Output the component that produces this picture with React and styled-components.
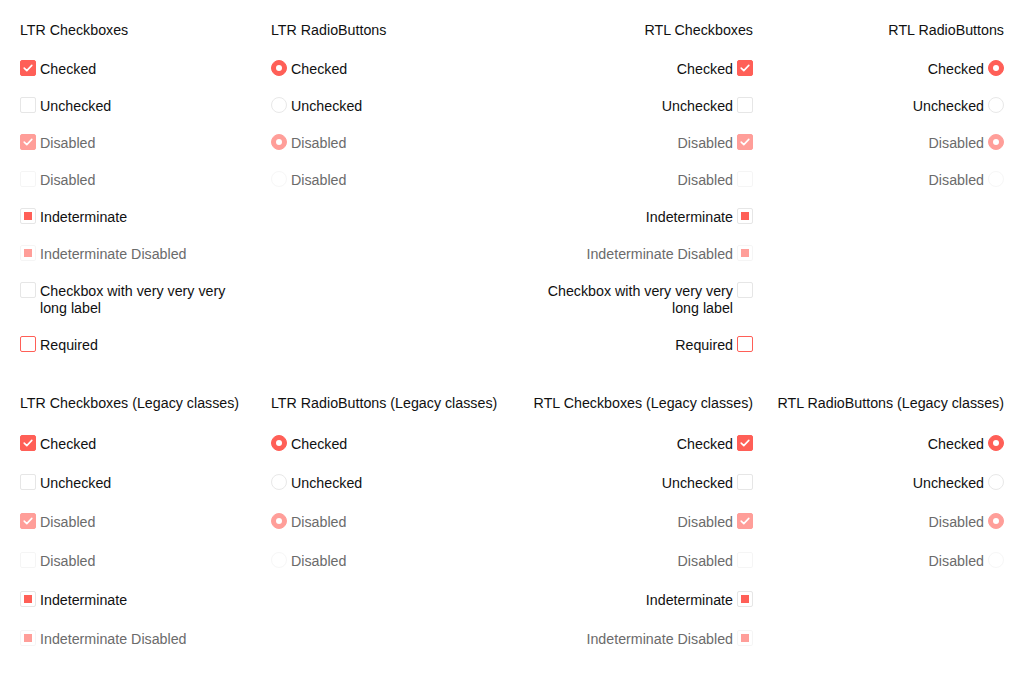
import React from "react";
import styled, { createGlobalStyle, css } from "styled-components";

const RED = "#ff5f57";

const GlobalStyle = createGlobalStyle`
  html, body {
    margin: 0;
    padding: 0;
    background: #fff;
  }
  body {
    font-family: "Liberation Sans", Arial, sans-serif;
    font-size: 14.25px;
    color: #111;
  }
`;

const Page = styled.div`
  padding: 22px 20px 0 0;
  display: flex;
  flex-direction: column;
  gap: 41px;
`;

const Section = styled.div`
  display: grid;
  grid-template-columns: repeat(4, 1fr);
`;

const Column = styled.div`
  padding-left: 20px;
  direction: ${(p) => (p.$rtl ? "rtl" : "ltr")};
  display: flex;
  flex-direction: column;
  gap: ${(p) => (p.$legacy ? "24px" : "22px")};
`;

const Title = styled.div`
  line-height: 17px;
  color: #111;
  white-space: nowrap;
`;

const List = styled.div`
  display: flex;
  flex-direction: column;
  gap: ${(p) => (p.$legacy ? "22px" : "20px")};
`;

const Row = styled.label`
  display: flex;
  align-items: flex-start;
  gap: 4px;
  line-height: 17px;
  color: ${(p) => (p.$disabled ? "#6b6b6b" : "#111")};
`;

const Text = styled.span`
  flex: 1;
  max-width: 211px;
`;

const boxBase = css`
  flex: none;
  box-sizing: border-box;
  width: 16px;
  height: 16px;
  margin-top: -1px;
  display: flex;
  align-items: center;
  justify-content: center;
  opacity: ${(p) => (p.$disabled ? 0.6 : 1)};
`;

const Box = styled.span`
  ${boxBase};
  border-radius: 2px;
  background: ${(p) => (p.$checked ? RED : "#fff")};
  border: 1px solid
    ${(p) =>
      p.$checked ? RED : p.$required ? RED : p.$disabled ? "#f0f0f0" : "#e6e6e6"};
`;

const IndeterminateMark = styled.span`
  width: 8px;
  height: 8px;
  background: ${RED};
`;

const Radio = styled.span`
  ${boxBase};
  border-radius: 50%;
  background: ${(p) => (p.$checked ? RED : "#fff")};
  border: 1px solid ${(p) => (p.$checked ? RED : p.$disabled ? "#f2f2f2" : "#e8e8e8")};
`;

const RadioDot = styled.span`
  width: 6px;
  height: 6px;
  border-radius: 50%;
  background: #fff;
`;

const Check = () => (
  <svg width="12" height="12" viewBox="0 0 12 12" fill="none">
    <path
      d="M2.2 6.1 L4.8 8.6 L9.8 3.4"
      stroke="#fff"
      strokeWidth="1.6"
      strokeLinecap="round"
      strokeLinejoin="round"
    />
  </svg>
);

const Checkbox = ({ checked, indeterminate, disabled, required, children }) => (
  <Row $disabled={disabled}>
    <Box $checked={checked} $disabled={disabled} $required={required}>
      {checked && <Check />}
      {indeterminate && <IndeterminateMark />}
    </Box>
    <Text>{children}</Text>
  </Row>
);

const RadioButton = ({ checked, disabled, children }) => (
  <Row $disabled={disabled}>
    <Radio $checked={checked} $disabled={disabled}>
      {checked && <RadioDot />}
    </Radio>
    <Text>{children}</Text>
  </Row>
);

const checkboxItems = [
  { label: "Checked", checked: true },
  { label: "Unchecked" },
  { label: "Disabled", checked: true, disabled: true },
  { label: "Disabled", disabled: true },
  { label: "Indeterminate", indeterminate: true },
  { label: "Indeterminate Disabled", indeterminate: true, disabled: true },
  { label: "Checkbox with very very very long label", full: true },
  { label: "Required", required: true, full: true },
];

const radioItems = [
  { label: "Checked", checked: true },
  { label: "Unchecked" },
  { label: "Disabled", checked: true, disabled: true },
  { label: "Disabled", disabled: true },
];

const CheckboxColumn = ({ title, rtl, legacy }) => (
  <Column $rtl={rtl} $legacy={legacy}>
    <Title>{title}</Title>
    <List $legacy={legacy}>
      {checkboxItems
        .filter((it) => !(legacy && it.full))
        .map((it, i) => (
          <Checkbox key={i} {...it}>
            {it.label}
          </Checkbox>
        ))}
    </List>
  </Column>
);

const RadioColumn = ({ title, rtl, legacy }) => (
  <Column $rtl={rtl} $legacy={legacy}>
    <Title>{title}</Title>
    <List $legacy={legacy}>
      {radioItems.map((it, i) => (
        <RadioButton key={i} {...it}>
          {it.label}
        </RadioButton>
      ))}
    </List>
  </Column>
);

export default function App() {
  return (
    <>
      <GlobalStyle />
      <Page>
        <Section>
          <CheckboxColumn title="LTR Checkboxes" />
          <RadioColumn title="LTR RadioButtons" />
          <CheckboxColumn title="RTL Checkboxes" rtl />
          <RadioColumn title="RTL RadioButtons" rtl />
        </Section>
        <Section>
          <CheckboxColumn title="LTR Checkboxes (Legacy classes)" legacy />
          <RadioColumn title="LTR RadioButtons (Legacy classes)" legacy />
          <CheckboxColumn title="RTL Checkboxes (Legacy classes)" rtl legacy />
          <RadioColumn title="RTL RadioButtons (Legacy classes)" rtl legacy />
        </Section>
      </Page>
    </>
  );
}
